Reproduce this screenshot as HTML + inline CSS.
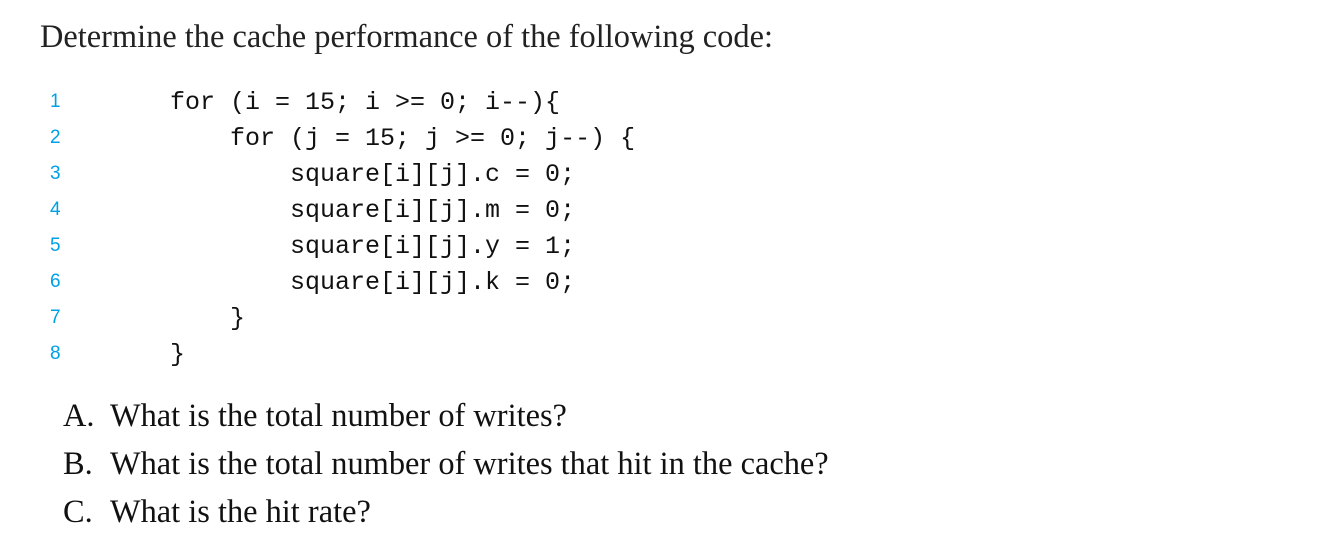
<!DOCTYPE html>
<html><head><style>
body{margin:0;width:1326px;height:538px;background:#fff;position:relative;overflow:hidden;color:#1a1a1a}
.t{position:absolute;left:40px;top:19px;font:32.4px "Liberation Serif",serif;white-space:nowrap;color:#222}
.n{position:absolute;left:50px;font:19px "Liberation Sans",sans-serif;color:#00a0e6}
.c{position:absolute;left:170px;font:25px "Liberation Mono",monospace;white-space:pre;color:#111}
.q{position:absolute;left:63px;font:32.4px "Liberation Serif",serif;white-space:nowrap;color:#111}
.q span{position:absolute;left:47px}
</style></head><body>
<div class="t">Determine the cache performance of the following code:</div>
<div class="n" style="top:91px">1</div>
<div class="n" style="top:127px">2</div>
<div class="n" style="top:163px">3</div>
<div class="n" style="top:199px">4</div>
<div class="n" style="top:235px">5</div>
<div class="n" style="top:271px">6</div>
<div class="n" style="top:307px">7</div>
<div class="n" style="top:343px">8</div>
<div class="c" style="top:88px">for (i = 15; i &gt;= 0; i--){</div>
<div class="c" style="top:124px">    for (j = 15; j &gt;= 0; j--) {</div>
<div class="c" style="top:160px">        square[i][j].c = 0;</div>
<div class="c" style="top:196px">        square[i][j].m = 0;</div>
<div class="c" style="top:232px">        square[i][j].y = 1;</div>
<div class="c" style="top:268px">        square[i][j].k = 0;</div>
<div class="c" style="top:304px">    }</div>
<div class="c" style="top:340px">}</div>
<div class="q" style="top:398px">A.<span>What is the total number of writes?</span></div>
<div class="q" style="top:446px">B.<span>What is the total number of writes that hit in the cache?</span></div>
<div class="q" style="top:494px">C.<span>What is the hit rate?</span></div>
</body></html>
